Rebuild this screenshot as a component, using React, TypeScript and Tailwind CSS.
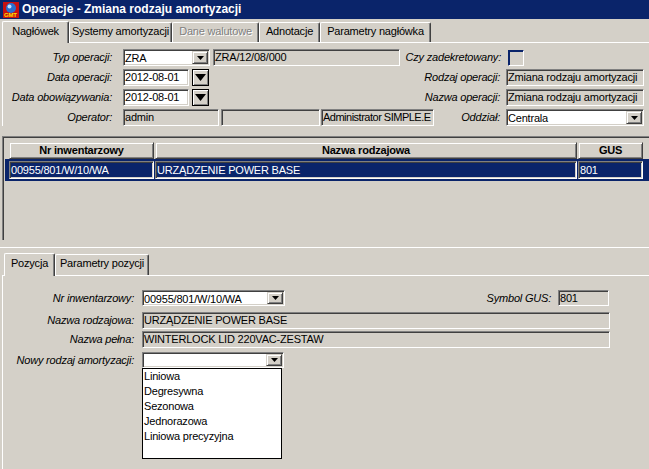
const sunken =
  'border border-t-[#808080] border-l-[#808080] border-r-white border-b-white shadow-[inset_1px_1px_0_#404040,inset_-1px_-1px_0_#d4d0c8]'
const raised =
  'border border-t-[#d4d0c8] border-l-[#d4d0c8] border-r-[#404040] border-b-[#404040] shadow-[inset_1px_1px_0_#fff,inset_-1px_-1px_0_#808080]'

function Arrow() {
  return (
    <svg width="7" height="4" viewBox="0 0 7 4">
      <polygon points="0,0 7,0 3.5,4" fill="#000" />
    </svg>
  )
}

function Field({ className = '', white = false, children }: { className?: string; white?: boolean; children?: React.ReactNode }) {
  return (
    <div
      className={`${sunken} ${white ? 'bg-white' : 'bg-[#d4d0c8]'} flex shrink-0 items-center overflow-hidden whitespace-nowrap pl-[1px] ${className}`}
    >
      {children}
    </div>
  )
}

function Combo({ className = '', children }: { className?: string; children?: React.ReactNode }) {
  return (
    <div className={`${sunken} flex shrink-0 items-stretch bg-white p-[1px] ${className}`}>
      <span className="flex-1 overflow-hidden whitespace-nowrap leading-[14px]">{children}</span>
      <span className={`${raised} flex w-[16px] items-center justify-center bg-[#d4d0c8]`}>
        <Arrow />
      </span>
    </div>
  )
}

function DateBtn() {
  return (
    <div className="flex h-[17px] w-[17px] shrink-0 items-center justify-center border border-black bg-[#d4d0c8] shadow-[inset_1px_1px_0_#fff,inset_-1px_-1px_0_#808080]">
      <svg width="11" height="7" viewBox="0 0 11 7">
        <polygon points="0,0 11,0 5.5,7" fill="#000" />
      </svg>
    </div>
  )
}

function Label({ className = '', children }: { className?: string; children: React.ReactNode }) {
  return <span className={`shrink-0 text-right italic whitespace-nowrap ${className}`}>{children}</span>
}

function Tab({ active = false, disabled = false, className = '', children }: { active?: boolean; disabled?: boolean; className?: string; children: React.ReactNode }) {
  return (
    <div
      className={`flex items-start justify-center whitespace-nowrap rounded-t-[2px] border-t border-l border-r border-t-white border-l-white border-r-[#404040] bg-[#d4d0c8] shadow-[inset_-1px_0_0_#808080] ${
        active ? 'relative z-10 -mb-px pt-[3px]' : 'pt-[2px]'
      } ${disabled ? 'text-[#808080] [text-shadow:1px_1px_0_#fff]' : ''} ${className}`}
    >
      {children}
    </div>
  )
}

function AppIcon() {
  return (
    <svg width="16" height="16" viewBox="0 0 16 16">
      <rect x="0" y="0" width="16" height="16" fill="#c81010" />
      <circle cx="8" cy="6" r="5" fill="#2a6fd0" />
      <circle cx="6.5" cy="4.5" r="2" fill="#bfe0ff" />
      <text x="1" y="15" fontSize="6" fontWeight="bold" fill="#ffe000" fontFamily="Liberation Sans, sans-serif">
        GMT
      </text>
    </svg>
  )
}

const methods = ['Liniowa', 'Degresywna', 'Sezonowa', 'Jednorazowa', 'Liniowa precyzyjna']

export default function App() {
  return (
    <div className="relative flex h-[469px] w-[649px] flex-col overflow-hidden bg-[#d4d0c8] text-[11px] leading-[13px] tracking-[-0.2px] text-black [font-family:'Liberation_Sans',Arial,sans-serif]">
      {/* title bar */}
      <div className="flex h-[19px] shrink-0 items-center gap-[3px] bg-[#0a246a] pl-[3px]">
        <AppIcon />
        <span className="text-[12px] font-bold tracking-normal text-white">Operacje - Zmiana rodzaju amortyzacji</span>
      </div>

      {/* header tabs */}
      <div className="flex h-[23px] shrink-0 items-end pl-[2px]">
        <Tab active className="h-[22px] w-[67px]">Nagłówek</Tab>
        <Tab className="h-[20px] w-[103px]">Systemy amortyzacji</Tab>
        <Tab disabled className="h-[20px] w-[87px]">Dane walutowe</Tab>
        <Tab className="h-[20px] w-[61px]">Adnotacje</Tab>
        <Tab className="h-[20px] w-[111px]">Parametry nagłówka</Tab>
      </div>

      <div className="ml-[2px] flex shrink-0 flex-col gap-[3px] border-t border-l border-white pt-[6px] pr-[5px]">
        <div className="flex h-[17px] items-center">
          <Label className="w-[109px]">Typ operacji:</Label>
          <Combo className="ml-[11px] h-[17px] w-[87px]">ZRA</Combo>
          <Field className="ml-[3px] h-[17px] w-[187px]">ZRA/12/08/000</Field>
          <Label className="flex-1">Czy zadekretowany:</Label>
          <div className="ml-[7px] h-[16px] w-[16px] shrink-0 border border-t-[#0a246a] border-l-[#0a246a] border-r-white border-b-white shadow-[inset_1px_1px_0_#0a246a]" />
          <div className="w-[120px]" />
        </div>
        <div className="flex h-[17px] items-center">
          <Label className="w-[109px]">Data operacji:</Label>
          <Field white className="ml-[11px] h-[17px] w-[66px]">2012-08-01</Field>
          <div className="ml-[3px]">
            <DateBtn />
          </div>
          <Label className="flex-1">Rodzaj operacji:</Label>
          <Field className="ml-[6px] h-[17px] w-[138px]">Zmiana rodzaju amortyzacji</Field>
        </div>
        <div className="flex h-[17px] items-center">
          <Label className="w-[109px]">Data obowiązywania:</Label>
          <Field white className="ml-[11px] h-[17px] w-[66px]">2012-08-01</Field>
          <div className="ml-[3px]">
            <DateBtn />
          </div>
          <Label className="flex-1">Nazwa operacji:</Label>
          <Field className="ml-[6px] h-[17px] w-[138px]">Zmiana rodzaju amortyzacji</Field>
        </div>
        <div className="flex h-[17px] items-center">
          <Label className="w-[109px]">Operator:</Label>
          <Field className="ml-[11px] h-[17px] w-[96px]">admin</Field>
          <Field className="ml-[2px] h-[17px] w-[99px]" />
          <Field className="ml-[1px] h-[17px] w-[113px] tracking-[-0.5px]">Administrator SIMPLE.E</Field>
          <Label className="flex-1">Oddział:</Label>
          <Combo className="ml-[6px] h-[17px] w-[138px]">Centrala</Combo>
        </div>
      </div>

      {/* list of items */}
      <div className="mt-[10px] ml-[2px] h-[104px] shrink-0 border-t border-l border-t-[#808080] border-l-[#808080] pt-[5px] shadow-[inset_1px_1px_0_#404040]">
        <div className="ml-[6px] flex gap-[1px] font-bold">
          <div className={`${raised} flex h-[17px] w-[145px] items-center justify-center bg-[#d4d0c8]`}>Nr inwentarzowy</div>
          <div className={`${raised} flex h-[17px] w-[422px] items-center justify-center bg-[#d4d0c8]`}>Nazwa rodzajowa</div>
          <div className={`${raised} flex h-[17px] w-[65px] items-center justify-center bg-[#d4d0c8]`}>GUS</div>
        </div>
        <div className="ml-[2px] flex h-[22px] gap-[1px] bg-[#0a246a] pt-[2px] pl-[4px] text-white">
          <div className={`${sunken} flex h-[18px] w-[145px] items-center bg-[#0a246a] pl-[1px]`}>00955/801/W/10/WA</div>
          <div className={`${sunken} flex h-[18px] w-[422px] items-center bg-[#0a246a] pl-[1px]`}>URZĄDZENIE POWER BASE</div>
          <div className={`${sunken} flex h-[18px] w-[65px] items-center bg-[#0a246a] pl-[1px]`}>801</div>
        </div>
      </div>

      {/* position panel */}
      <div className="mt-[7px] flex flex-1 flex-col border-t border-white">
        <div className="flex h-[27px] shrink-0 items-end pl-[4px]">
          <Tab active className="h-[23px] w-[51px]">Pozycja</Tab>
          <Tab className="h-[21px] w-[94px]">Parametry pozycji</Tab>
        </div>
        <div className="ml-[2px] flex flex-1 flex-col border-t border-l border-white pt-[14px] pr-[40px]">
          <div className="flex h-[16px] items-center">
            <Label className="w-[131px]">Nr inwentarzowy:</Label>
            <Combo className="ml-[8px] h-[16px] w-[143px]">00955/801/W/10/WA</Combo>
            <Label className="flex-1">Symbol GUS:</Label>
            <Field className="ml-[7px] h-[16px] w-[51px]">801</Field>
          </div>
          <div className="mt-[6px] flex h-[17px] items-center">
            <Label className="w-[131px]">Nazwa rodzajowa:</Label>
            <Field className="ml-[8px] h-[17px] w-[468px]">URZĄDZENIE POWER BASE</Field>
          </div>
          <div className="mt-[2px] flex h-[17px] items-center">
            <Label className="w-[131px]">Nazwa pełna:</Label>
            <Field className="ml-[8px] h-[17px] w-[468px]">WINTERLOCK LID 220VAC-ZESTAW</Field>
          </div>
          <div className="mt-[4px] flex h-[16px] items-center">
            <Label className="w-[131px]">Nowy rodzaj amortyzacji:</Label>
            <div className="relative ml-[8px]">
              <Combo className="h-[16px] w-[142px]" />
              <div className="absolute top-[16px] left-0 z-20 h-[91px] w-[140px] border border-black bg-white">
                {methods.map((m) => (
                  <div key={m} className="h-[15px] pl-[1px] leading-[15px]">
                    {m}
                  </div>
                ))}
              </div>
            </div>
          </div>
        </div>
      </div>
    </div>
  )
}
